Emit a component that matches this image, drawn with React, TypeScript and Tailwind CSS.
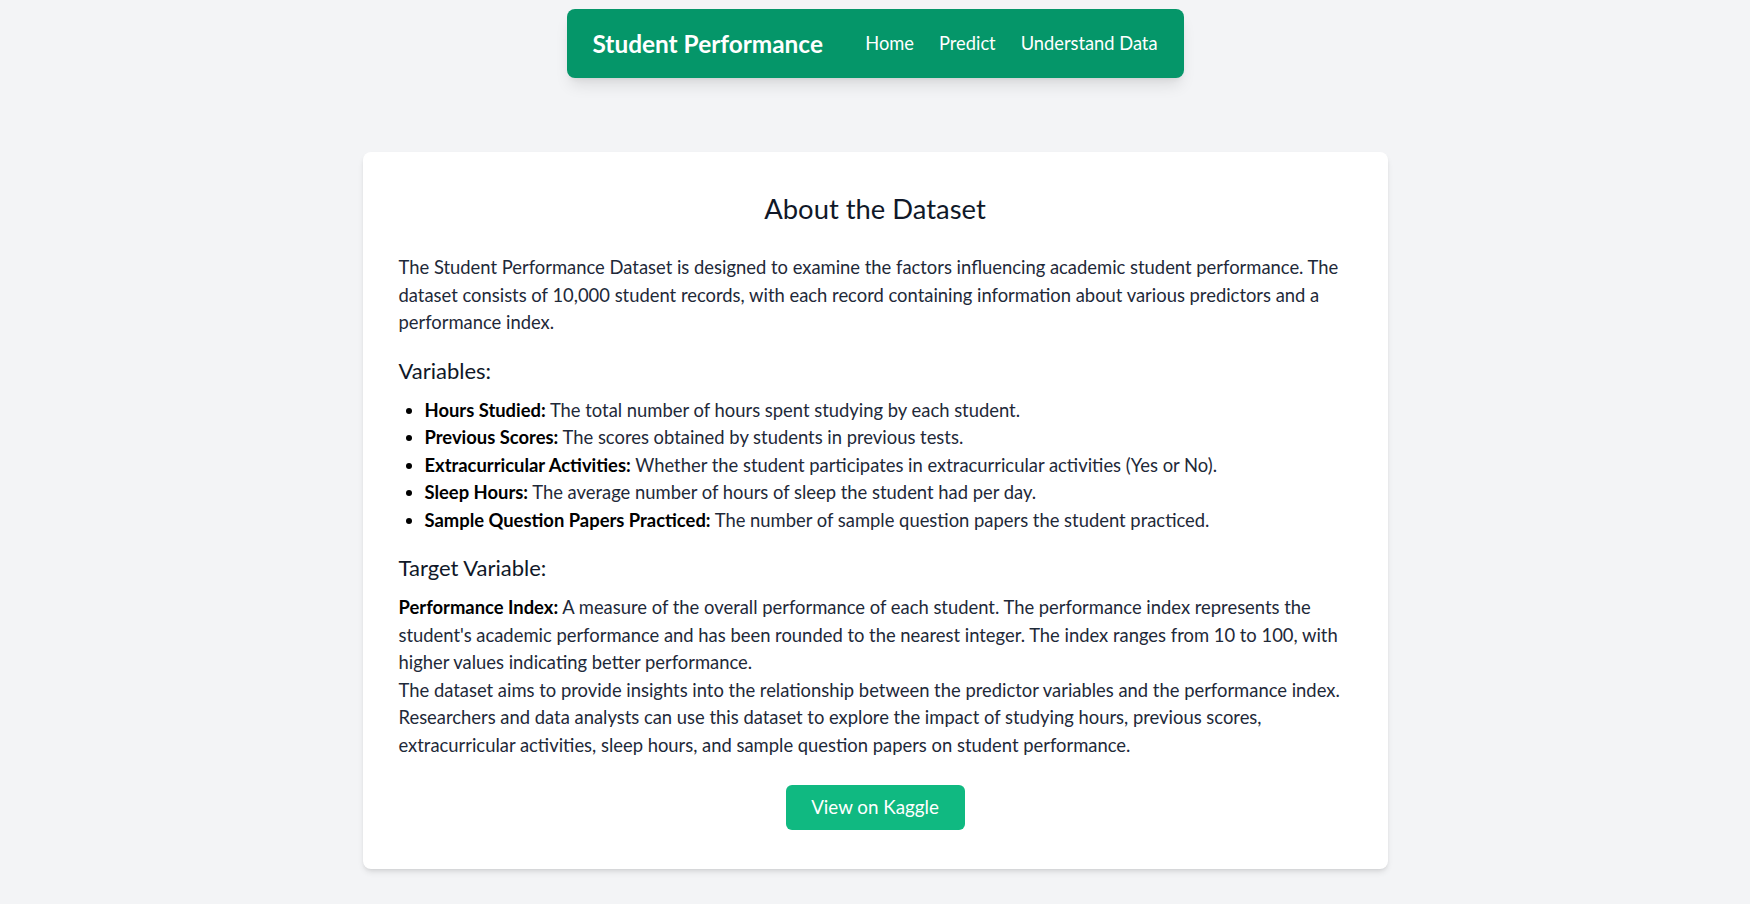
import React from "react";

const variables: [string, string][] = [
  ["Hours Studied:", "The total number of hours spent studying by each student."],
  ["Previous Scores:", "The scores obtained by students in previous tests."],
  ["Extracurricular Activities:", "Whether the student participates in extracurricular activities (Yes or No)."],
  ["Sleep Hours:", "The average number of hours of sleep the student had per day."],
  ["Sample Question Papers Practiced:", "The number of sample question papers the student practiced."],
];

export default function App() {
  return (
    <div className="min-h-[904px] bg-[#f3f4f6] font-['Lato',sans-serif] text-gray-800">
      <div className="flex justify-center pt-[9px]">
        <nav className="flex h-[69px] w-[617px] items-center justify-between rounded-lg bg-[#059669] px-[26px] text-white shadow-lg">
          <span className="text-[24.4px] font-bold leading-8">Student Performance</span>
          <div className="flex items-center gap-[25px] text-[18.3px]">
            <a href="#" className="text-white">Home</a>
            <a href="#" className="text-white">Predict</a>
            <a href="#" className="text-white">Understand Data</a>
          </div>
        </nav>
      </div>

      <main className="mx-auto mt-[74px] w-[1025px] rounded-lg bg-white px-9 pt-[39px] pb-[39px] shadow-md">
        <h2 className="mb-[27px] text-center text-[27.4px] leading-9 text-gray-900">About the Dataset</h2>
        <p className="text-[18.4px] leading-[27.5px]">
          The Student Performance Dataset is designed to examine the factors influencing academic student performance. The dataset consists of 10,000 student records, with each record containing information about various predictors and a performance index.
        </p>

        <h3 className="mt-5 mb-3 text-[22px] leading-7 text-gray-900">Variables:</h3>
        <ul className="list-disc pl-[26px] text-[18.4px] leading-[27.5px]">
          {variables.map(([k, v]) => (
            <li key={k} className="marker:text-black">
              <strong className="font-bold text-black">{k}</strong> {v}
            </li>
          ))}
        </ul>

        <h3 className="mt-5 mb-3 text-[22px] leading-7 text-gray-900">Target Variable:</h3>
        <p className="text-[18.4px] leading-[27.5px]">
          <strong className="font-bold text-black">Performance Index:</strong> A measure of the overall performance of each student. The performance index represents the student's academic performance and has been rounded to the nearest integer. The index ranges from 10 to 100, with higher values indicating better performance.
          <br />
          The dataset aims to provide insights into the relationship between the predictor variables and the performance index. Researchers and data analysts can use this dataset to explore the impact of studying hours, previous scores, extracurricular activities, sleep hours, and sample question papers on student performance.
        </p>

        <div className="mt-[26px] flex justify-center">
          <a href="#" className="flex h-[45px] w-[179px] items-center justify-center rounded-md bg-[#10b981] text-[18.8px] text-white">
            View on Kaggle
          </a>
        </div>
      </main>
    </div>
  );
}
